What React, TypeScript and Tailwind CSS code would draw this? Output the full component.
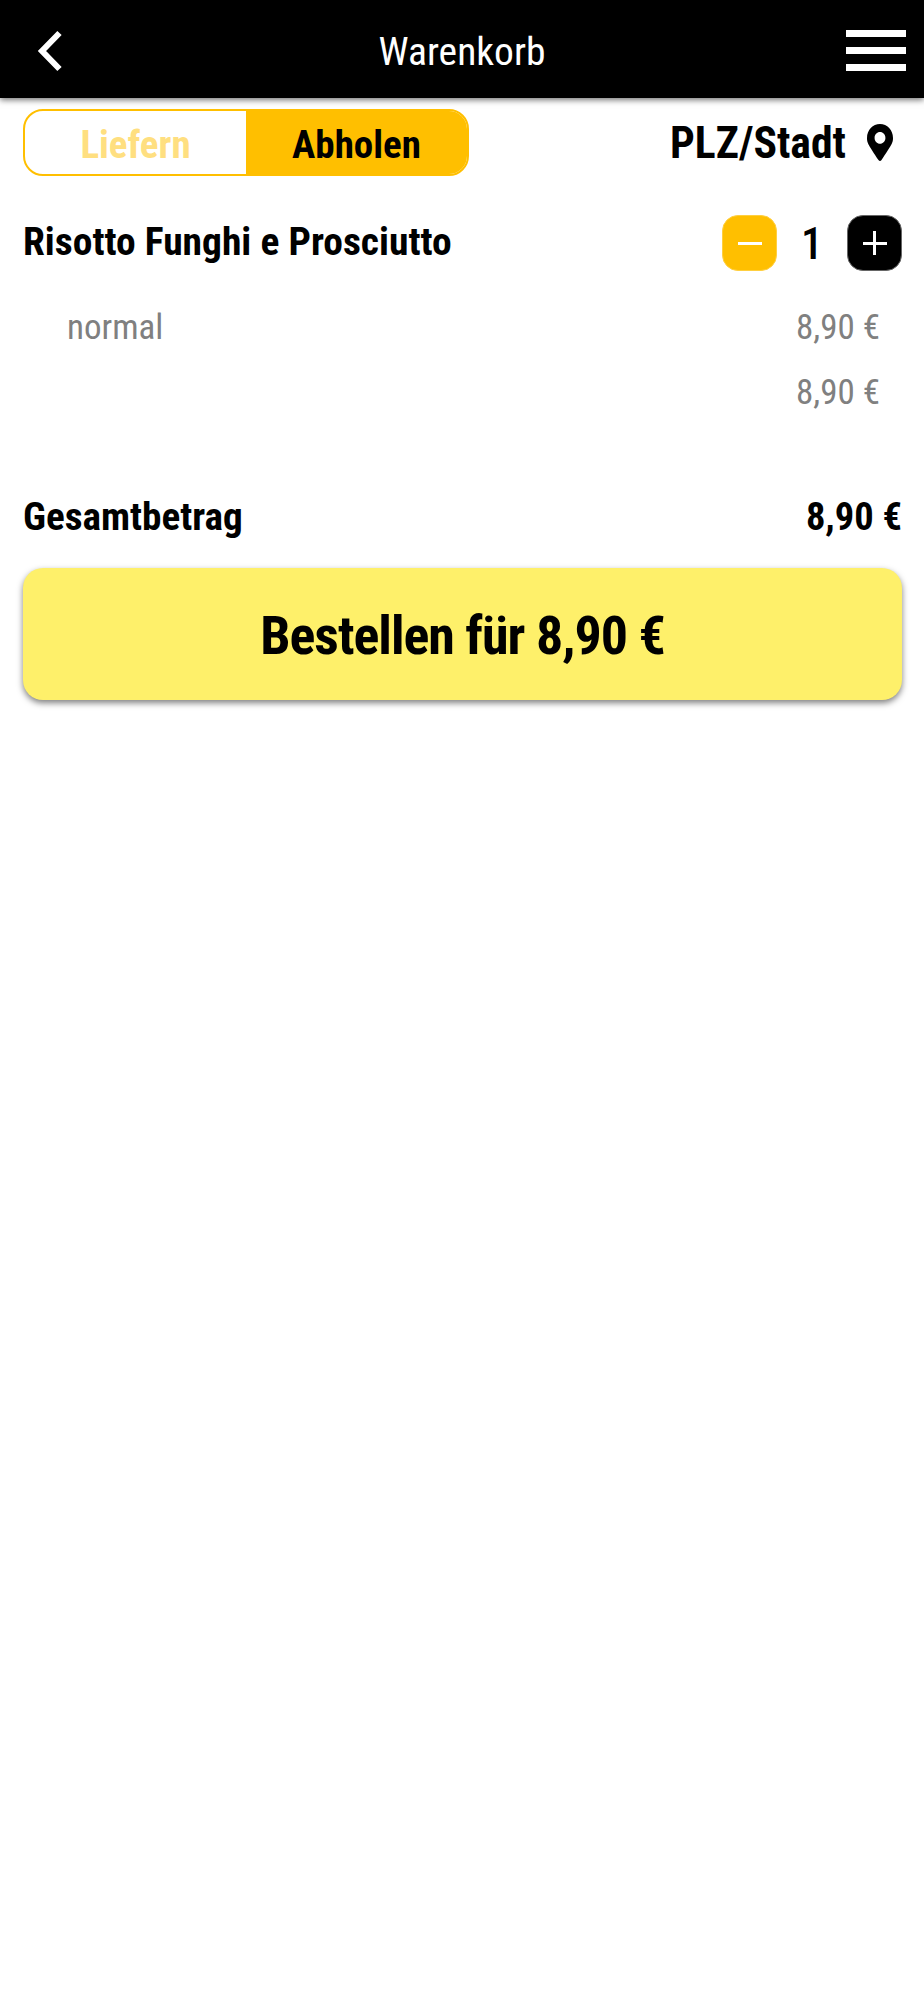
import React from "react";

const font = { fontFamily: "Roboto, 'Liberation Sans', sans-serif", fontStretch: "75%" } as React.CSSProperties;

export default function App() {
  return (
    <div className="w-[924px] h-[2000px] bg-white text-black overflow-hidden" style={font}>
      <header className="h-[98px] bg-black flex items-center relative shadow-[0_2px_6px_rgba(0,0,0,0.55)] px-[18px]">
        <div className="w-[60px] pl-[18px] pt-[3px] flex items-center">
          <svg width="26" height="42" viewBox="0 0 26 42">
            <path d="M23.5 3 L6 21 L23.5 39" fill="none" stroke="#fff" strokeWidth="6" />
          </svg>
        </div>
        <div className="flex-1 text-center text-white text-[39.5px] leading-[48px] font-normal pt-[5px]">Warenkorb</div>
        <div className="flex flex-col gap-[10px] w-[60px] pt-[2px]">
          <div className="h-[7px] bg-white" />
          <div className="h-[7px] bg-white" />
          <div className="h-[7px] bg-white" />
        </div>
      </header>
      <main className="pl-[23px] pr-[22px]">
        <div className="flex items-center justify-between mt-[11px] h-[67px]">
          <div className="flex w-[446px] h-[67px] rounded-[20px] border-2 border-[#ffbf00] overflow-hidden">
            <div className="w-[221px] flex items-center justify-center text-[39px] font-bold text-[#ffdf80] pt-[5px]">Liefern</div>
            <div className="flex-1 bg-[#ffbf00] flex items-center justify-center text-[39px] font-bold pt-[5px]">Abholen</div>
          </div>
          <div className="flex items-center gap-[21px] pr-[9px]">
            <span className="text-[43.7px] font-bold pt-[3px]">PLZ/Stadt</span>
            <svg width="26" height="37" viewBox="0 0 384 512" preserveAspectRatio="none"><path d="M172.268 501.67C26.97 291.031 0 268.413 0 192 0 85.961 85.961 0 192 0s192 85.961 192 192c0 76.413-26.97 99.031-172.268 309.67-9.535 13.774-29.93 13.773-39.464 0zM192 272c44.183 0 80-35.817 80-80s-35.817-80-80-80-80 35.817-80 80 35.817 80 80 80z" /></svg>
          </div>
        </div>
        <div className="flex items-center justify-between mt-[39px] h-[56px]">
          <div className="text-[39.5px] font-bold mt-[-2px]">Risotto Funghi e Prosciutto</div>
          <div className="flex items-center">
            <div className="w-[55px] h-[56px] rounded-[16px] bg-[#ffbf00] border border-[#ffcf40] flex items-center justify-center">
              <div className="w-[24px] h-[3px] bg-white" />
            </div>
            <div className="w-[70px] text-center text-[44px] font-medium pt-[2px]">1</div>
            <div className="w-[55px] h-[56px] rounded-[16px] bg-black border border-[#666] flex items-center justify-center relative">
              <div className="w-[24px] h-[3px] bg-white" />
              <div className="w-[3px] h-[24px] bg-white absolute" />
            </div>
          </div>
        </div>
        <div className="flex justify-between text-[#808080] text-[35px] mt-[34px] pl-[44px] pr-[22px] leading-[46px]">
          <span>normal</span><span>8,90 €</span>
        </div>
        <div className="flex justify-end text-[#808080] text-[35px] mt-[19px] pr-[22px] leading-[46px]">
          <span>8,90 €</span>
        </div>
        <div className="flex justify-between text-[39.2px] font-bold mt-[76px] leading-[50px]">
          <span>Gesamtbetrag</span><span className="text-[38.5px]">8,90 €</span>
        </div>
        <button className="block w-full h-[132px] mt-[26px] rounded-[20px] bg-[#fef06a] shadow-[0_3px_6px_rgba(0,0,0,0.5)] text-[54px] tracking-[-1px] font-bold text-center pt-[3px]">Bestellen für 8,90 €</button>
      </main>
    </div>
  );
}
